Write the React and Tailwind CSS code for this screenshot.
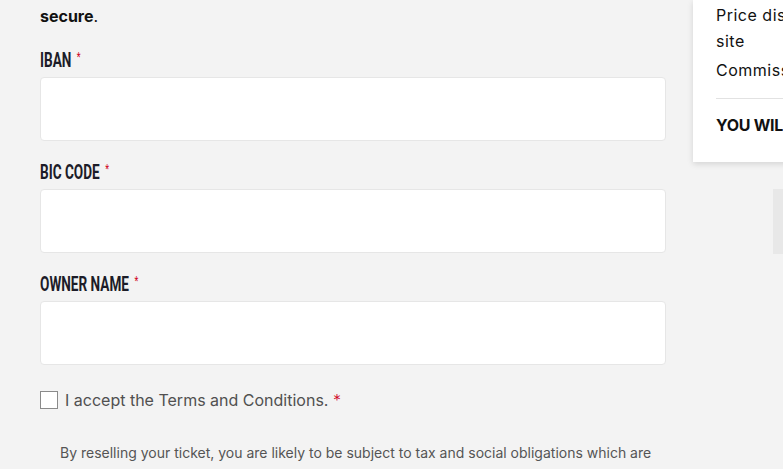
const labelFont = { fontFamily: "Roboto, 'Liberation Sans', sans-serif" };

function Field({ label }) {
  return (
    <div className="flex flex-col">
      <div className="h-5 leading-5">
        <span
          className="inline-block origin-left scale-x-[0.68] text-[20px] font-bold uppercase text-[#1c1c28] whitespace-nowrap"
          style={labelFont}
        >
          {label}
          <span className="ml-[8px] align-top text-[13px] font-normal text-[#d0021b] leading-none">*</span>
        </span>
      </div>
      <input
        type="text"
        className="mt-[7px] h-[64px] w-full rounded-[4px] border border-[#e6e6e6] bg-white px-4 text-base outline-none"
      />
    </div>
  );
}

export default function App() {
  return (
    <div className="h-[469px] w-[783px] overflow-hidden bg-[#f3f3f3] font-['Inter','Liberation_Sans',sans-serif]">
      <div className="flex gap-[27px] pl-[40px]">
        {/* left form column */}
        <div className="flex w-[626px] shrink-0 flex-col">
          <p className="mt-[4px] text-base leading-6 text-[#111]">
            <b className="font-bold">secure</b>.
          </p>

          <div className="mt-[22px] flex flex-col gap-[21px]">
            <Field label="IBAN" />
            <Field label="BIC code" />
            <Field label="Owner name" />
          </div>

          <label className="mt-[23px] flex items-center gap-[7px] text-base text-[#505050]">
            <span className="h-[18px] w-[18px] shrink-0 border border-[#8a8a8a] bg-white" />
            <span>
              I accept the Terms and Conditions. <span className="font-light text-[#d0021b]">*</span>
            </span>
          </label>

          <p className="mt-[29px] pl-[20px] text-[14px] leading-6 text-[#555] whitespace-nowrap">
            By reselling your ticket, you are likely to be subject to tax and social obligations which are
          </p>
        </div>

        {/* right summary column */}
        <div className="flex w-[320px] shrink-0 flex-col">
          <div className="bg-white px-[23px] pt-[2px] pb-[24px] text-base leading-[26px] tracking-[0.5px] text-[#111] shadow-[0_2px_6px_rgba(0,0,0,0.13)]">
            <div className="flex justify-between gap-4">
              <span className="w-[180px]">Price displayed on the site</span>
              <span>€50.00</span>
            </div>
            <div className="mt-[3px] flex justify-between gap-4">
              <span>Commission</span>
              <span>-€5.00</span>
            </div>
            <div className="mt-[15px] border-t border-[#e2e2e2]" />
            <div className="mt-[13px] flex justify-between font-bold uppercase tracking-[-0.3px]">
              <span>You will receive</span>
              <span>€45.00</span>
            </div>
          </div>
          <div className="mt-[27px] ml-[80px] h-[65px] w-[200px] bg-[#e8e8e8]" />
        </div>
      </div>
    </div>
  );
}
